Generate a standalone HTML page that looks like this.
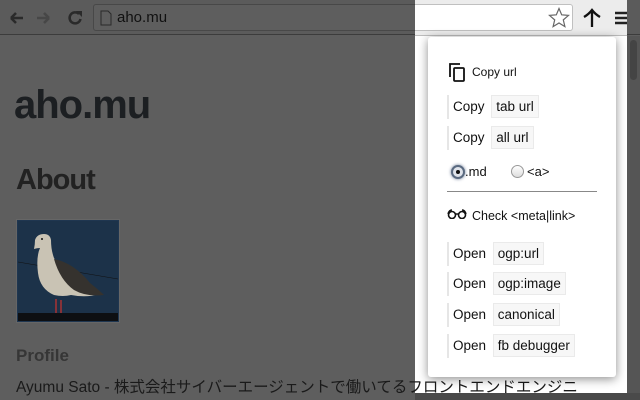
<!DOCTYPE html>
<html><head><meta charset="utf-8"><style>
*{margin:0;padding:0;box-sizing:border-box}
body{width:640px;height:400px;overflow:hidden;background:#5e5e5e;font-family:"Liberation Sans","Noto Sans CJK JP",sans-serif;position:relative}
.abs{position:absolute}
.tb{left:0;top:0;width:640px;height:35px;background:#5b5b5b;border-bottom:1px solid #3c3c3c}
.url{left:93px;top:4px;width:480px;height:27px;border:1px solid #484848;border-radius:3px;background:#5e5e5e}
.light{left:415px;top:0;width:212px;height:393px;background:#fff}
.ltb{left:415px;top:0;width:212px;height:36px;background:#ececec;border-bottom:1px solid #bdbdbd}
.lurl{left:415px;top:4px;width:158px;height:27px;background:#fff;border:1px solid #c0c0c0;border-left:none;border-radius:0 3px 3px 0}
.pop{left:428px;top:37px;width:188px;height:340px;background:#fff;border-radius:3px;box-shadow:0 2px 10px rgba(0,0,0,.45);font-size:13.5px;color:#111}
.row{position:absolute;left:19px;height:24px;border-left:2px solid #e6e6e6;padding-left:4px;line-height:24px}
.code{display:inline-block;background:#f7f7f7;border:1px solid #eaeaea;padding:0 4px;line-height:21px;margin-left:3px}
</style></head><body>
<div class="abs tb"></div>
<div class="abs url"></div>
<svg class="abs" style="left:8px;top:9px" width="80" height="18"><g stroke="#2a2a2a" stroke-width="2.5" fill="none"><path d="M3 9h12M3 9l5-5M3 9l5 5"/></g><g stroke="#474747" stroke-width="2.5" fill="none"><path d="M29 9h12M41 9l-5-5M41 9l-5 5"/></g><path d="M71 5a5.5 5.5 0 1 0 1.5 5" stroke="#2a2a2a" stroke-width="2.5" fill="none"/><path d="M68 2h6v6z" fill="#2a2a2a"/></svg>
<svg class="abs" style="left:100px;top:10px" width="12" height="16"><path d="M1 1h7l3 3v11H1z" fill="none" stroke="#2a2a2a"/></svg>
<div class="abs" style="left:117px;top:9px;font-size:15px;color:#111">aho.mu</div>
<div class="abs light"></div>
<div class="abs ltb"></div>
<div class="abs lurl"></div>
<svg class="abs" style="left:548px;top:7px" width="22" height="21"><path d="M11 1.5l2.7 6.3 6.8.6-5.2 4.5 1.6 6.7L11 16l-5.9 3.6 1.6-6.7L1.5 8.4l6.8-.6z" fill="#fff" stroke="#666" stroke-width="1.2"/></svg>
<svg class="abs" style="left:582px;top:8px" width="20" height="20"><path d="M10 2v17M2 9Q7 6 10 2Q13 6 18 9" stroke="#111" stroke-width="2.3" fill="none"/></svg>
<svg class="abs" style="left:614px;top:11px" width="14" height="14"><path d="M1 2h12M1 7h12M1 12h12" stroke="#222" stroke-width="2.5"/></svg>
<div class="abs" style="left:627px;top:36px;width:13px;height:364px;background:#555"></div>
<div class="abs" style="left:630px;top:40px;width:7px;height:40px;background:#444;border-radius:4px"></div>
<div class="abs" style="left:415px;top:393px;width:225px;height:7px;background:#4a4a4a"></div>

<div class="abs" style="left:14px;top:83px;font-size:40px;font-weight:bold;color:#1c1f22;letter-spacing:-1px">aho.mu</div>
<div class="abs" style="left:16px;top:164px;font-size:29px;font-weight:bold;color:#222;letter-spacing:-1px">About</div>
<div class="abs" style="left:16px;top:219px;width:104px;height:104px;border:1px solid #666;background:#1f3650"></div>
<svg class="abs" style="left:18px;top:221px" width="100" height="100"><rect width="100" height="100" fill="#1c3249"/><path d="M0 41L100 58" stroke="#111" stroke-width=".6"/><rect y="92" width="100" height="8" fill="#0d0f12"/><path d="M17 19q2-6 9-6q6 0 7 6q0 10 3 18q5 10 15 16q18 12 30 20q-12 4-28 1q-8 2-17 0q-14-6-16-22q-2-16 2-25q-3 0-6 1q1-5 1-9z" fill="#c9c3b4"/><path d="M36 38q20 4 36 24q10 8 14 12q-18 2-30-5q-14-10-20-31z" fill="#35322e"/><path d="M38 78v14M43 79v13" stroke="#a33" stroke-width="1.5"/><circle cx="24" cy="18" r="1" fill="#111"/></svg>
<div class="abs" style="left:16px;top:346px;font-size:17px;font-weight:bold;color:#363636">Profile</div>
<div class="abs" style="left:16px;top:375px;font-size:15.5px;color:#1a1a1a;white-space:nowrap">Ayumu Sato - 株式会社サイバーエージェントで働いてるフロントエンドエンジニ</div>

<div class="abs pop">
<svg class="abs" style="left:20px;top:26px" width="18" height="20"><path d="M2 14V1h10" fill="none" stroke="#111" stroke-width="1.8"/><rect x="6" y="5" width="10" height="13" rx="1" fill="none" stroke="#111" stroke-width="1.8"/></svg>
<div class="abs" style="left:44px;top:28px;font-size:12px">Copy url</div>
<div class="row" style="top:58px">Copy <span class="code">tab url</span></div>
<div class="row" style="top:89px">Copy <span class="code">all url</span></div>
<div class="abs" style="left:23px;top:128px;width:14px;height:14px;border-radius:50%;background:#dfe3ea;border:2px solid #5a6a80;box-shadow:0 0 3px #6a7a94"></div>
<div class="abs" style="left:28px;top:133px;width:4px;height:4px;border-radius:50%;background:#111"></div>
<div class="abs" style="left:37px;top:127px;font-size:13px">.md</div>
<div class="abs" style="left:83px;top:128px;width:13px;height:13px;border-radius:50%;border:1px solid #999;background:linear-gradient(#fff,#ddd)"></div>
<div class="abs" style="left:99px;top:127px;font-size:13px">&lt;a&gt;</div>
<div class="abs" style="left:19px;top:154px;width:150px;height:1px;background:#888"></div>
<svg class="abs" style="left:19px;top:172px" width="20" height="10"><circle cx="5" cy="6" r="3.5" fill="none" stroke="#111" stroke-width="1.6"/><circle cx="15" cy="6" r="3.5" fill="none" stroke="#111" stroke-width="1.6"/><path d="M1 5Q2 1 5 1M19 5Q18 1 15 1M8.5 5h3" fill="none" stroke="#111" stroke-width="1.4"/></svg>
<div class="abs" style="left:44px;top:172px;font-size:12.5px">Check &lt;meta|link&gt;</div>
<div class="row" style="top:205px">Open <span class="code">ogp:url</span></div>
<div class="row" style="top:235px">Open <span class="code">ogp:image</span></div>
<div class="row" style="top:266px">Open <span class="code">canonical</span></div>
<div class="row" style="top:297px">Open <span class="code">fb debugger</span></div>
</div>
</body></html>
